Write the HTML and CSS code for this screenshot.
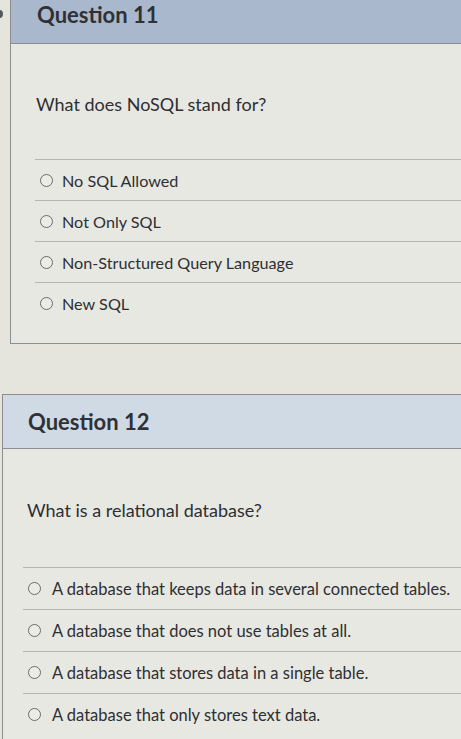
FILE: index.html
```html
<!DOCTYPE html>
<html lang="en">
<head>
<meta charset="utf-8">
<title>Quiz</title>
<link rel="stylesheet" href="styles.css">
</head>
<body>
<div class="page">
  <span class="edge-mark"></span>
  <section class="card card-first">
    <header class="card-header header-dark"><h2>Question 11</h2></header>
    <div class="card-body">
      <p class="question">What does NoSQL stand for?</p>
      <ul class="answers">
        <li class="answer"><span class="radio"></span><span>No SQL Allowed</span></li>
        <li class="answer"><span class="radio"></span><span>Not Only SQL</span></li>
        <li class="answer"><span class="radio"></span><span>Non-Structured Query Language</span></li>
        <li class="answer"><span class="radio"></span><span>New SQL</span></li>
      </ul>
    </div>
  </section>
  <section class="card card-second">
    <header class="card-header header-light"><h2>Question 12</h2></header>
    <div class="card-body">
      <p class="question">What is a relational database?</p>
      <ul class="answers">
        <li class="answer"><span class="radio"></span><span>A database that keeps data in several connected tables.</span></li>
        <li class="answer"><span class="radio"></span><span>A database that does not use tables at all.</span></li>
        <li class="answer"><span class="radio"></span><span>A database that stores data in a single table.</span></li>
        <li class="answer"><span class="radio"></span><span>A database that only stores text data.</span></li>
      </ul>
    </div>
  </section>
</div>
</body>
</html>
```
FILE: styles.css
```css
html, body {
  margin: 0;
  padding: 0;
  background: #e5e5de;
  overflow: hidden;
}
body {
  font-family: Lato, "Liberation Sans", sans-serif;
  color: #35363a;
}
.page {
  position: relative;
  width: 461px;
  height: 739px;
  overflow: hidden;
}
.edge-mark {
  position: absolute;
  left: -4px;
  top: 10px;
  width: 7px;
  height: 8px;
  border-radius: 50%;
  background: #55585e;
}
.card {
  background: #e8e8e2;
  border: 1px solid #8d8e90;
  width: 500px;
}
.card-first {
  margin: -11px 0 0 10px;
}
.card-second {
  margin: 50px 0 0 2px;
}
.card-header {
  box-sizing: border-box;
  height: 54px;
  display: flex;
  align-items: center;
  border-bottom: 1px solid #8b8e94;
}
.header-dark {
  background: #aab8ce;
  padding: 0 0 4px 26px;
}
.header-light {
  background: #cfdae5;
  padding-left: 25px;
}
.card-header h2 {
  margin: 0;
  font-size: 22px;
  font-weight: 700;
  color: #2f3136;
}
.card-first .card-body {
  padding: 50px 0 20px 24px;
}
.card-second .card-body {
  padding: 51px 0 20px 20px;
}
.question {
  margin: 0 0 45px 1px;
  font-size: 18px;
  line-height: 20px;
  color: #2e2f33;
}
.card-second .question {
  margin-left: 4px;
  margin-bottom: 47px;
}
.answers {
  list-style: none;
  margin: 0;
  padding: 0;
}
.answer {
  box-sizing: border-box;
  height: 41px;
  border-top: 1px solid #b5b6b4;
  display: flex;
  align-items: center;
  gap: 9px;
  padding-left: 5px;
  font-size: 16.2px;
  color: #2e2f33;
}
.card-second .answer {
  height: 42px;
  gap: 11px;
  font-size: 16.5px;
}
.radio {
  width: 11px;
  height: 11px;
  border: 1.5px solid #6a6b6e;
  border-radius: 50%;
  background: #ecece7;
  flex: none;
}
```
